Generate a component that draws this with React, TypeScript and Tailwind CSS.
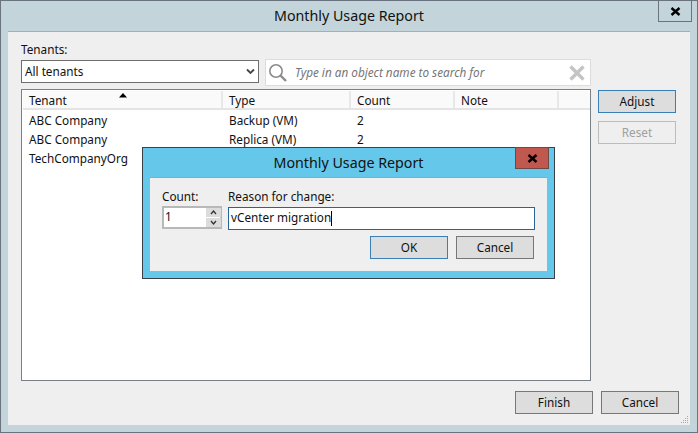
const font = "font-['Noto_Sans','Open_Sans',sans-serif]";

const Btn = ({ label, className = "" }: { label: string; className?: string }) => (
  <button className={`w-[78px] h-[23px] border bg-[#dddddd] text-[11.75px] leading-none text-[#111] ${className}`}>
    {label}
  </button>
);

const CloseIcon = () => (
  <svg width="11" height="9" viewBox="0 0 11 9">
    <path d="M1.5 1 L9.5 8 M9.5 1 L1.5 8" stroke="#000" strokeWidth="2.4" />
  </svg>
);

const columns = [
  { name: "Tenant", width: "w-[200px]" },
  { name: "Type", width: "w-[128px]" },
  { name: "Count", width: "w-[104px]" },
  { name: "Note", width: "w-[104px]" },
];

const rows = [
  ["ABC Company", "Backup (VM)", "2"],
  ["ABC Company", "Replica (VM)", "2"],
  ["TechCompanyOrg", "", ""],
];

const App = () => {
  return (
    <div className={`relative w-[698px] h-[433px] border border-[#6a7480] bg-[#c3d5db] flex flex-col overflow-hidden text-[#111] ${font}`}>
      {/* Title bar */}
      <div className="h-[30px] shrink-0 flex items-center justify-center text-[14.25px] text-[#111]">Monthly Usage Report</div>
      <div className="absolute top-[-1px] right-[5px] w-[34px] h-[22px] border border-[#6a7480] flex items-center justify-center">
        <CloseIcon />
      </div>

      {/* Main panel */}
      <div className="mx-[7px] h-[394px] bg-[#efefef] border-t border-[#9fb0ba] flex flex-col relative">
        <div className="flex pl-[13px] pt-[8px]">
          <div className="w-[570px]">
            <div className="text-[11.75px] leading-[18px] h-[16px]">Tenants:</div>
            <div className="flex gap-[6px] mt-[3px]">
              <div className="w-[238px] h-[23px] mt-[1px] border border-[#6e6e6e] bg-white flex items-center justify-between pl-[3px] pr-[3px] text-[11.75px]">
                <span>All tenants</span>
                <svg width="9" height="7" viewBox="0 0 9 7">
                  <path d="M1 1.5 L4.5 5 L8 1.5" fill="none" stroke="#444" strokeWidth="1.8" />
                </svg>
              </div>
              <div className="w-[326px] h-[27px] border border-[#dcdcdc] bg-white flex items-center pl-[2px] pr-[5px]">
                <svg width="20" height="20" viewBox="0 0 20 20" className="shrink-0">
                  <circle cx="8" cy="8" r="6.2" fill="none" stroke="#8c8c8c" strokeWidth="1.6" />
                  <path d="M12.5 12.5 L18 18" stroke="#8c8c8c" strokeWidth="2.4" />
                </svg>
                <span className="ml-[7px] text-[11.75px] italic text-[#767676] flex-1">Type in an object name to search for</span>
                <svg width="16" height="16" viewBox="0 0 16 16" className="shrink-0">
                  <path d="M1.5 1.5 L14.5 14.5 M14.5 1.5 L1.5 14.5" stroke="#c4c4c4" strokeWidth="3.4" />
                </svg>
              </div>
            </div>

            {/* Table */}
            <div className="mt-[3px] h-[292px] border border-[#7b8088] bg-white pt-[1px] pl-[1px] text-[11.75px]">
              <div className="relative flex h-[19px] bg-[#fafafa] border-b-2 border-[#e4e4e4] leading-[19px]">
                {columns.map((c) => (
                  <div key={c.name} className={`${c.width} pl-[6px] border-r-2 border-[#e8e8e8]`}>
                    {c.name}
                  </div>
                ))}
                <div className="flex-1" />
                <svg width="8" height="5" viewBox="0 0 8 5" className="absolute left-[96px] top-[2px]">
                  <path d="M0 4.5 L4 0 L8 4.5 Z" fill="#000" />
                </svg>
              </div>
              {rows.map((r, i) => (
                <div key={i} className="flex h-[19px] leading-[21px]">
                  <div className="w-[200px] pl-[6px]">{r[0]}</div>
                  <div className="w-[128px] pl-[6px]">{r[1]}</div>
                  <div className="w-[104px] pl-[6px]">{r[2]}</div>
                </div>
              ))}
            </div>
          </div>

          <div className="ml-[7px] pt-[50px] flex flex-col gap-[8px]">
            <Btn label="Adjust" className="border-[#3a7fb5]" />
            <Btn label="Reset" className="border-[#bcbcbc] !bg-[#efefef] !text-[#a0a0a0]" />
          </div>
        </div>

        <div className="flex justify-end gap-[8px] pr-[11px] mt-[10px]">
          <Btn label="Finish" className="border-[#777777]" />
          <Btn label="Cancel" className="border-[#777777]" />
        </div>

        {/* Resize grip */}
        <svg width="8" height="8" viewBox="0 0 8 8" className="absolute right-px bottom-px">
          <path d="M6 0h1v1H6zM4 2h1v1H4zM6 2h1v1H6zM2 4h1v1H2zM4 4h1v1H4zM6 4h1v1H6zM0 6h1v1H0zM2 6h1v1H2zM4 6h1v1H4zM6 6h1v1H6z" fill="#a8a8a8" />
        </svg>
      </div>

      {/* Modal dialog */}
      <div className="absolute left-[141px] top-[146px] w-[413px] h-[132px] border border-[#3a4048] bg-[#65c8ea] flex flex-col">
        <div className="h-[29px] shrink-0 flex items-center justify-center text-[14.25px] text-[#111]">Monthly Usage Report</div>
        <div className="absolute top-[-1px] right-[5px] w-[34px] h-[22px] border border-[#6a4a48] bg-[#c0584f] flex items-center justify-center">
          <CloseIcon />
        </div>
        <div className="mx-[7px] h-[94px] bg-[#efefef] border-t border-[#8fa8b5] pl-[12px] pr-[12px] pt-[9px] text-[11.75px]">
          <div className="flex gap-[6px]">
            <div className="w-[60px]">
              <div className="h-[16px] leading-[18px]">Count:</div>
              <div className="mt-[3px] h-[23px] border-2 border-[#b8b8b8] bg-white flex items-center justify-between">
                <span className="pl-px leading-[16px] -mt-[3px]">1</span>
                <div className="flex flex-col gap-px w-[15px] -mr-px">
                  <div className="h-[9px] bg-[#dcdcdc] flex items-center justify-center">
                    <svg width="7" height="5" viewBox="0 0 7 5"><path d="M1 4 L3.5 1 L6 4" fill="none" stroke="#333" strokeWidth="1.3" /></svg>
                  </div>
                  <div className="h-[9px] bg-[#dcdcdc] flex items-center justify-center">
                    <svg width="7" height="5" viewBox="0 0 7 5"><path d="M1 1 L3.5 4 L6 1" fill="none" stroke="#333" strokeWidth="1.3" /></svg>
                  </div>
                </div>
              </div>
            </div>
            <div className="flex-1">
              <div className="h-[16px] leading-[18px]">Reason for change:</div>
              <div className="mt-[4px] h-[23px] border border-[#2a6496] bg-white flex items-center pl-[2px]">
                <span className="-mt-px">vCenter migration</span>
                <span className="w-px h-[15px] bg-black" />
              </div>
            </div>
          </div>
          <div className="flex justify-end gap-[8px] mt-[6px] pr-px">
            <Btn label="OK" className="border-[#3a7fb5]" />
            <Btn label="Cancel" className="border-[#777777]" />
          </div>
        </div>
      </div>
    </div>
  );
};

export default App;
